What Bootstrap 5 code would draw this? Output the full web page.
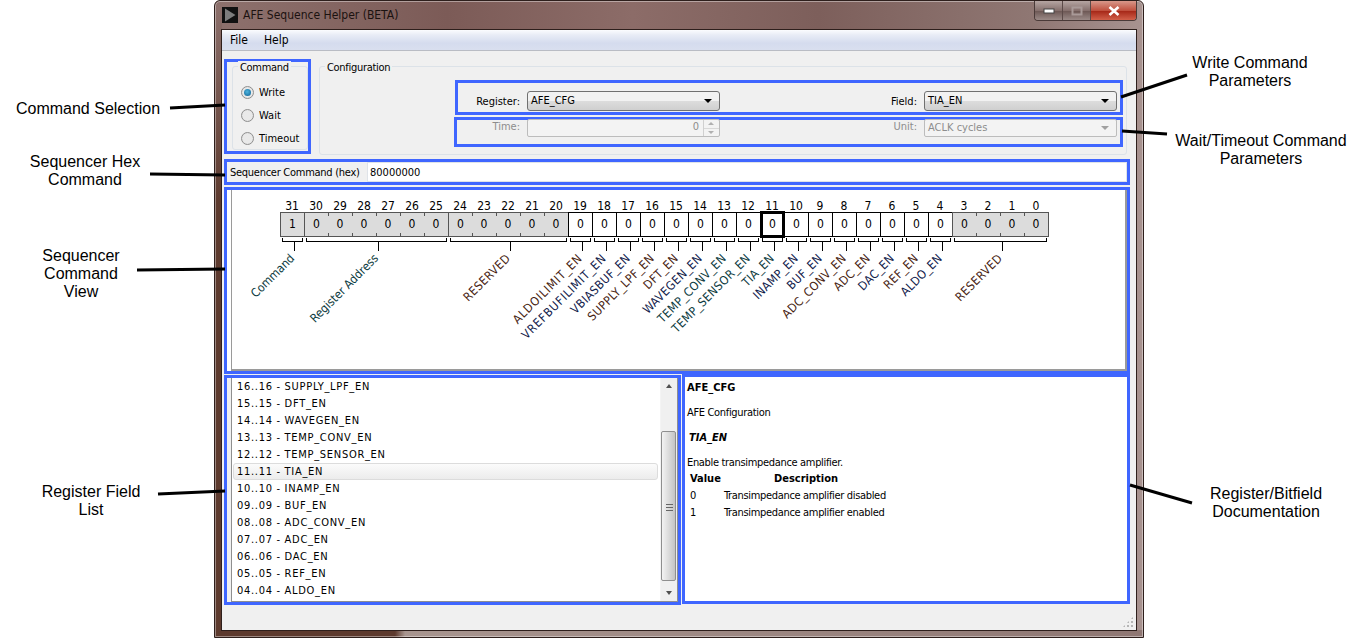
<!DOCTYPE html>
<html lang="en">
  <head>
    <meta charset="UTF-8" />
    <meta name="viewport" content="width=device-width, initial-scale=1.0" />
    <title>AFE Sequence Helper (BETA)</title>
    <link href="https://cdn.jsdelivr.net/npm/bootstrap@5.3.3/dist/css/bootstrap.min.css" rel="stylesheet" />
    <style>
      html, body { height: 638px; overflow: hidden; background: #fff; }
      body { position: relative; font-family: "DejaVu Sans Condensed", "DejaVu Sans", sans-serif; font-stretch: condensed; font-size: 11px; line-height: 13px; color: #000; }

      /* callouts around the window */
      .callout { position: absolute; font: 16px/18px "Liberation Sans", Arial, sans-serif; font-stretch: normal; text-align: center; transform: translateX(-50%); white-space: nowrap; }
      .arrows { position: absolute; left: 0; top: 0; pointer-events: none; z-index: 5; }

      /* blue annotation boxes over the app */
      .hl { border: 3px solid #3f66ff; }

      /* window chrome */
      .win { margin-left: 214px; width: 930px; height: 638px; border: 1px solid #2e1f1c; border-radius: 6px 6px 0 0; padding: 0 6px 6px;
             box-shadow: inset 0 0 0 1px rgba(255, 255, 255, .4);
             background: linear-gradient(180deg, rgba(141, 113, 109, 1) 0, rgba(141, 113, 109, 0) 200px) 0 0 / 7px 100% no-repeat,
                         linear-gradient(90deg, #5d3a2e 0, #5d3a2e 180px, #a8958f 190px, #8f7773 100%) 0 100% / 100% 7px no-repeat,
                         linear-gradient(90deg, #5d3a2e 0 7px, transparent 7px),
                         linear-gradient(90deg, #8d716d 0%, #7c5b57 25%, #8c6c68 45%, #7d5f5b 65%, #8f7773 88%, #a89390 100%); }
      .tbar { height: 28px; }
      .tbar-title { font-size: 12px; color: #1b1210; margin-left: 5px; }
      .app-ico { width: 16px; height: 16px; margin-left: 1px; }
      .capbtns { height: 20px; width: 103px; border: 1px solid #4a3a38; border-top: 0; border-radius: 0 0 4px 4px; overflow: hidden; }
      .capbtn { height: 100%; background: linear-gradient(180deg, #b5a5a2, #86706d 50%, #6f5a57 55%, #9b8a87); border-right: 1px solid #5c4a48; }
      .capbtn-min { width: 28px; }
      .capbtn-max { width: 28px; }
      .capbtn-close { flex: 1; background: linear-gradient(180deg, #d8988a, #c0513f 50%, #a82a1a 55%, #d2604a); border-right: 0; }
      .client { height: 602px; background: #f0f0f0; border: 1px solid #2e1f1c; }

      /* menu */
      .menubar { height: 21px; flex: none; background: linear-gradient(180deg, #fbfcfe 0%, #e8ecf6 25%, #d5dcee 65%, #d9dfef 100%); border-bottom: 1px solid #b9bcc4; padding-left: 8px; gap: 16px; font-size: 12px; line-height: 20px; }

      /* top area */
      .toprow { height: 108px; padding: 8px 0 0 2px; flex: none; }
      .cmdbox { width: 87px; height: 95px; padding: 4px 0 0 5px; }
      .groupb { border: 1px solid #dce2e8; border-radius: 3px; position: relative; }
      .groupb-cmd { height: 84px; width: 76px; }
      .groupb-cfg { width: 808px; height: 89px; margin: 7px 0 0 8px; }
      .groupt { position: absolute; top: -6px; background: #f0f0f0; padding: 0 2px; left: 5px; line-height: 13px; letter-spacing: -.3px; }
      .radios { padding: 19px 0 0 8px; gap: 10px; }
      .radio-row { height: 13px; gap: 5px; line-height: 13px; }
      .rad { width: 13px; height: 13px; border-radius: 50%; border: 1px solid #8f8f8f; background: radial-gradient(circle at 50% 50%, #e9e9e9 0 55%, #d2d2d2 100%); display: inline-block; position: relative; }
      .rad-on::after { content: ""; position: absolute; left: 2px; top: 2px; width: 7px; height: 7px; border-radius: 50%; background: radial-gradient(circle at 45% 40%, #4db4de, #0d5f92); }
      .parambox { position: absolute; }
      .parambox-w { left: 135px; width: 668px; top: 13px; height: 35px; padding-top: 7px; }
      .parambox-t { left: 134px; width: 669px; top: 50px; height: 30px; }
      .plabel { margin-right: 7px; text-align: right; }
      .plabel-w { width: 62px; }
      .plabel-t { width: 63px; }
      .plabel-r { width: 52px; text-align: right; margin-right: 7px; }
      .combo { height: 20px; border: 1px solid #707070; border-radius: 3px; background: linear-gradient(180deg, #f2f2f2 0 48%, #dcdcdc 52%, #cfcfcf 100%); padding: 0 7px 0 3px; line-height: 18px; }
      .combo-reg, .combo-fld { width: 193px; }
      .edge-r { margin-right: 3px; }
      .caret-d { width: 0; height: 0; border: 4px solid transparent; border-top: 4px solid #000; border-bottom: 0; }
      .dim { color: #8d8d8d; }
      .field-off { height: 18px; border: 1px solid #bcbcbc; border-radius: 2px; background: #f3f3f3; line-height: 14px; margin-top: -1px; }
      .spin { width: 193px; }
      .spin-val { flex: 1; text-align: right; padding-right: 4px; }
      .spin-btns { width: 16px; border-left: 1px solid #d0d0d0; height: 100%; }
      .spin-btns i { flex: 1; display: block; position: relative; }
      .spin-btns i + i { border-top: 1px solid #d8d8d8; }
      .spin-btns i::after { content: ""; position: absolute; left: 4px; top: 2px; width: 0; height: 0; border: 3px solid transparent; border-top: 0; border-bottom: 3px solid #b0b0b0; }
      .spin-btns i + i::after { border-bottom: 0; border-top: 3px solid #b0b0b0; }
      .combo-off { width: 193px; padding: 0 7px 0 3px; }
      .caret-off { border-top-color: #a0a0a0; }

      /* hex row */
      .hexbox { height: 26px; margin: 0 0 0 2px; width: 906px; flex: none; }
      .hexlbl { width: 140px; padding-left: 3px; line-height: 21px; white-space: nowrap; letter-spacing: -.27px; }
      .hexval { flex: 1; background: #fff; border: 1px solid #dfe3e8; height: 20px; line-height: 20px; padding-left: 2px; }

      /* bit view */
      .viewbox { height: 187px; width: 906px; margin: 2px 0 0 2px; background: #fff; position: relative; flex: none; }
      .view-inner { position: absolute; top: 0; left: 4px; right: 0; bottom: 0; border: 2px solid #9a9a9a; border-top: 0; border-left-width: 1px; }
      .bitcanvas { position: absolute; left: 53px; top: 0; width: 768px; height: 180px; font-size: 12px; }
      .bitnum { position: absolute; top: 8px; width: 24px; text-align: center; line-height: 16px; }
      .bitcell { position: absolute; top: 22px; width: 25px; height: 25px; border: 1px solid #000; text-align: center; line-height: 23px; background: #fff; }
      .bitcell-ro { background: linear-gradient(#555, #555) left top / 1px 3px no-repeat, linear-gradient(#555, #555) left bottom / 1px 3px no-repeat, #dcdcdc; border-color: #555; border-left: 0; border-right-color: transparent; }
      .bitcell-first { border-left: 1px solid #555; background: #dcdcdc; }
      .bitcell-last { border-right-color: #555; }
      .bitcell-sel { border: 3px solid #000; line-height: 21px; z-index: 2; top: 21px; height: 27px; }
      .brk { position: absolute; top: 48px; height: 4px; border: 1px solid #000; border-top: 0; }
      .stem { position: absolute; top: 52px; height: 9px; width: 1px; background: #000; }
      .bitlab { position: absolute; top: 62px; white-space: nowrap; transform: translateX(-100%) rotate(-45deg); transform-origin: 100% 0; letter-spacing: .4px; }
      .bitlab-lc { letter-spacing: 0; }
      .bitlab-wide { letter-spacing: .8px; }

      /* list + doc */
      .lowrow { margin: 1px 0 0 2px; width: 906px; height: 230px; flex: none; }
      .listbox { width: 457px; height: 230px; }
      .listin { height: 100%; margin-left: 4px; background: #fff; border: 1px solid #8f8f8f; border-top: 0; }
      .listitems { flex: 1; padding: 0 2px 0 1px; }
      .lfield { height: 17px; line-height: 15px; padding-left: 3px; letter-spacing: .7px; border: 1px solid transparent; }
      .lfield-on { background: linear-gradient(180deg, #fbfbfb, #ececec); border: 1px solid #dcdcdc; border-radius: 3px; }
      .vscroll { width: 17px; background: #f0f0f0; border-left: 1px solid #f4f4f4; position: relative; }
      .vscroll-up, .vscroll-dn { position: absolute; left: 5px; width: 0; height: 0; border: 3px solid transparent; }
      .vscroll-up { top: 6px; border-bottom: 4px solid #505050; border-top: 0; }
      .vscroll-dn { bottom: 6px; border-top: 4px solid #505050; border-bottom: 0; }
      .vthumb { position: absolute; left: 0; right: 1px; top: 53px; height: 150px; border: 1px solid #8f8f8f; border-radius: 2px; background: linear-gradient(90deg, #f3f3f3, #dcdcdc 50%, #c4c4c4); }
      .vgrip { position: absolute; left: 4px; top: 72px; width: 7px; height: 7px; border-top: 1px solid #666; border-bottom: 1px solid #666; }
      .vgrip::after { content: ""; position: absolute; left: 0; right: 0; top: 2px; height: 1px; background: #666; }
      .docbox { width: 448px; height: 230px; margin: -1px 0 0 1px; background: #fff; padding: 2px; }
      .doc-h { font-weight: 700; line-height: 17px; }
      .doc-p { line-height: 17px; margin-top: 8px; letter-spacing: -.33px; }
      .doc-i { font-weight: 700; font-style: italic; margin: 8px 0 0 2px; line-height: 17px; }
      .doc-t { line-height: 17px; padding-left: 3px; letter-spacing: -.33px; }
      .doc-th { margin-top: -1px; font-weight: 700; letter-spacing: 0; }
      .doc-v { width: 34px; }
      .doc-dh { padding-left: 50px; }
      .grip { position: absolute; right: 2px; bottom: 2px; width: 12px; height: 12px; background-image: radial-gradient(#b5b5b5 1px, transparent 1.2px); background-size: 4px 4px; clip-path: polygon(100% 0, 100% 100%, 0 100%); }
    </style>
  </head>
  <body>
    <div class="callout" style="left:88px;top:100px">Command Selection</div>
    <div class="callout" style="left:85px;top:153px">Sequencer Hex<br />Command</div>
    <div class="callout" style="left:81px;top:247px">Sequencer<br />Command<br />View</div>
    <div class="callout" style="left:91px;top:483px">Register Field<br />List</div>
    <div class="callout" style="left:1250px;top:54px">Write Command<br />Parameters</div>
    <div class="callout" style="left:1261px;top:132px">Wait/Timeout Command<br />Parameters</div>
    <div class="callout" style="left:1266px;top:485px">Register/Bitfield<br />Documentation</div>

    <svg class="arrows" width="1367" height="638" stroke="#000" stroke-width="3">
      <line x1="170" y1="108" x2="225" y2="105" />
      <line x1="150" y1="174" x2="225" y2="175" />
      <line x1="137" y1="270" x2="225" y2="269" />
      <line x1="158" y1="494" x2="225" y2="491" />
      <line x1="1121" y1="97" x2="1187" y2="75" />
      <line x1="1122" y1="131" x2="1167" y2="134" />
      <line x1="1130" y1="485" x2="1192" y2="503" />
    </svg>

    <div class="win">
      <div class="tbar d-flex align-items-center justify-content-between">
        <div class="d-flex align-items-center">
          <svg class="app-ico" viewBox="0 0 16 16"><rect width="16" height="16" fill="#111" /><path d="M3 1.5 L13.5 8 L3 14.5 Z" fill="#7d7d7d" /></svg>
          <span class="tbar-title">AFE Sequence Helper (BETA)</span>
        </div>
        <div class="capbtns d-flex align-self-start">
          <div class="capbtn capbtn-min d-flex align-items-center justify-content-center">
            <svg width="12" height="6" viewBox="0 0 12 6"><rect x="1" y="1" width="10" height="4" fill="#fff" stroke="#444" /></svg>
          </div>
          <div class="capbtn capbtn-max d-flex align-items-center justify-content-center">
            <svg width="12" height="10" viewBox="0 0 12 10"><rect x="1.5" y="1.5" width="9" height="7" fill="none" stroke="#a99a98" stroke-width="2" /></svg>
          </div>
          <div class="capbtn capbtn-close d-flex align-items-center justify-content-center">
            <svg width="12" height="10" viewBox="0 0 12 10"><path d="M1.5 1 L10.5 9 M10.5 1 L1.5 9" stroke="#fff" stroke-width="2.6" /></svg>
          </div>
        </div>
      </div>

      <div class="client d-flex flex-column">
        <div class="menubar d-flex"><span>File</span><span>Help</span></div>

        <div class="toprow d-flex">
          <div class="cmdbox hl">
            <div class="groupb groupb-cmd">
              <span class="groupt">Command</span>
              <div class="radios d-flex flex-column">
                <div class="radio-row d-flex align-items-center"><span class="rad rad-on"></span>Write</div>
                <div class="radio-row d-flex align-items-center"><span class="rad"></span>Wait</div>
                <div class="radio-row d-flex align-items-center"><span class="rad"></span>Timeout</div>
              </div>
            </div>
          </div>

          <div class="groupb groupb-cfg">
            <span class="groupt">Configuration</span>
            <div class="parambox parambox-w hl d-flex align-items-center">
              <span class="plabel plabel-w">Register:</span>
              <div class="combo combo-reg d-flex align-items-center justify-content-between"><span>AFE_CFG</span><span class="caret-d"></span></div>
              <span class="plabel-r ms-auto">Field:</span>
              <div class="combo combo-fld edge-r d-flex align-items-center justify-content-between"><span>TIA_EN</span><span class="caret-d"></span></div>
            </div>
            <div class="parambox parambox-t hl d-flex align-items-start">
              <span class="plabel plabel-t dim">Time:</span>
              <div class="field-off spin d-flex dim"><span class="spin-val">0</span><span class="spin-btns d-flex flex-column"><i></i><i></i></span></div>
              <span class="plabel-r ms-auto dim">Unit:</span>
              <div class="field-off combo-off edge-r d-flex align-items-center justify-content-between dim"><span>ACLK cycles</span><span class="caret-d caret-off"></span></div>
            </div>
          </div>
        </div>

        <div class="hexbox hl d-flex">
          <div class="hexlbl">Sequencer Command (hex)</div>
          <div class="hexval">80000000</div>
        </div>

        <div class="viewbox hl">
          <div class="view-inner"></div>
          <div class="bitcanvas" id="bits"></div>
        </div>

        <div class="lowrow d-flex">
          <div class="listbox hl">
            <div class="listin d-flex">
              <div class="listitems" id="fields"></div>
              <div class="vscroll">
                <span class="vscroll-up"></span>
                <div class="vthumb"><span class="vgrip"></span></div>
                <span class="vscroll-dn"></span>
              </div>
            </div>
          </div>
          <div class="docbox hl">
            <div class="doc-h">AFE_CFG</div>
            <div class="doc-p">AFE Configuration</div>
            <div class="doc-i">TIA_EN</div>
            <div class="doc-p">Enable transimpedance amplifier.</div>
            <div class="doc-t doc-th d-flex"><span class="doc-v">Value</span><span class="doc-dh">Description</span></div>
            <div class="doc-t d-flex"><span class="doc-v">0</span><span>Transimpedance amplifier disabled</span></div>
            <div class="doc-t d-flex"><span class="doc-v">1</span><span>Transimpedance amplifier enabled</span></div>
          </div>
        </div>
        <div class="flex-grow-1 position-relative"><span class="grip"></span></div>
      </div>
    </div>

    <script>
      'use strict';

      // [hi, lo, name, label colour, grey]
      const TEAL = '#0b3a40';
      const BROWN = '#46220f';
      const NAVY = '#10204a';
      const GROUPS = [
        [31, 31, 'Command', TEAL, true],
        [30, 25, 'Register Address', TEAL, true],
        [24, 20, 'RESERVED', BROWN, true],
        [19, 19, 'ALDOILIMIT_EN', BROWN],
        [18, 18, 'VREFBUFILIMIT_EN', NAVY],
        [17, 17, 'VBIASBUF_EN', NAVY],
        [16, 16, 'SUPPLY_LPF_EN', BROWN],
        [15, 15, 'DFT_EN', BROWN],
        [14, 14, 'WAVEGEN_EN', NAVY],
        [13, 13, 'TEMP_CONV_EN', TEAL],
        [12, 12, 'TEMP_SENSOR_EN', TEAL],
        [11, 11, 'TIA_EN', TEAL],
        [10, 10, 'INAMP_EN', NAVY],
        [9, 9, 'BUF_EN', NAVY],
        [8, 8, 'ADC_CONV_EN', BROWN],
        [7, 7, 'ADC_EN', BROWN],
        [6, 6, 'DAC_EN', NAVY],
        [5, 5, 'REF_EN', BROWN],
        [4, 4, 'ALDO_EN', NAVY],
        [3, 0, 'RESERVED', BROWN, true],
      ];
      const CELL = 24;
      let html = '';

      GROUPS.forEach(([hi, lo, name, colour, grey]) => {
        for (let b = hi; b >= lo; b--) {
          const x = (31 - b) * CELL;
          const cls = ['bitcell'];
          if (grey) cls.push('bitcell-ro');
          if (grey && b === hi) cls.push('bitcell-first');
          if (grey && b === lo) cls.push('bitcell-last');
          if (b === 11) cls.push('bitcell-sel');
          html += `<div class="bitnum" style="left:${x}px">${b}</div>`;
          html += `<div class="${cls.join(' ')}" style="left:${x}px">${b === 31 ? 1 : 0}</div>`;
        }
        const left = (31 - hi) * CELL + 2;
        const width = (hi - lo + 1) * CELL - 3;
        const stem = Math.floor(left + width / 2) + 2;
        let labCls = 'bitlab';
        if (/[a-z]/.test(name)) labCls += ' bitlab-lc';
        if (name.includes('ILIMIT')) labCls += ' bitlab-wide';
        html += `<div class="brk" style="left:${left}px;width:${width}px"></div>`;
        html += `<div class="stem" style="left:${stem}px"></div>`;
        html += `<div class="${labCls}" style="left:${stem - 6}px;color:${colour}">${name}</div>`;
      });
      document.querySelector('#bits').innerHTML = html;

      const FIELDS = ['16..16 - SUPPLY_LPF_EN', '15..15 - DFT_EN', '14..14 - WAVEGEN_EN', '13..13 - TEMP_CONV_EN', '12..12 - TEMP_SENSOR_EN', '11..11 - TIA_EN', '10..10 - INAMP_EN', '09..09 - BUF_EN', '08..08 - ADC_CONV_EN', '07..07 - ADC_EN', '06..06 - DAC_EN', '05..05 - REF_EN', '04..04 - ALDO_EN'];
      document.querySelector('#fields').innerHTML = FIELDS.map((f) => `<div class="lfield${f.startsWith('11') ? ' lfield-on' : ''}">${f}</div>`).join('');
    </script>
    <script src="https://cdn.jsdelivr.net/npm/bootstrap@5.3.3/dist/js/bootstrap.bundle.min.js"></script>
  </body>
</html>
